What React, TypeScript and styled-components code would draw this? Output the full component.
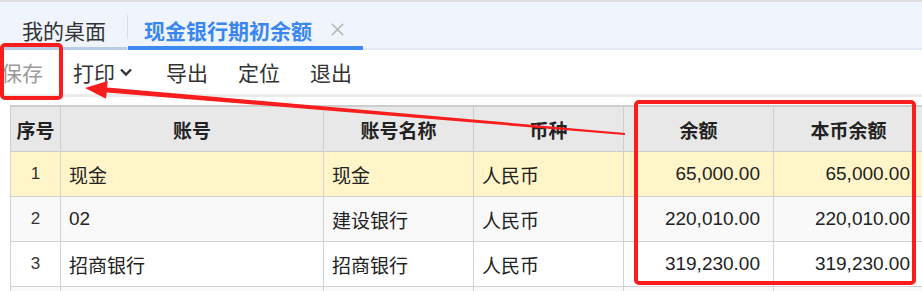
import styled, { createGlobalStyle } from "styled-components";

const GlobalStyle = createGlobalStyle`
  html, body {
    margin: 0;
    padding: 0;
    background: #fff;
    overflow: hidden;
  }
  body {
    font-family: "Liberation Sans", "Noto Sans CJK SC", sans-serif;
    color: #333;
  }
`;

type Row = {
  no: number;
  code: string;
  name: string;
  currency: string;
  balance: string;
  localBalance: string;
};

const rows: Row[] = [
  { no: 1, code: "现金", name: "现金", currency: "人民币", balance: "65,000.00", localBalance: "65,000.00" },
  { no: 2, code: "02", name: "建设银行", currency: "人民币", balance: "220,010.00", localBalance: "220,010.00" },
  { no: 3, code: "招商银行", name: "招商银行", currency: "人民币", balance: "319,230.00", localBalance: "319,230.00" },
];

const columns = [
  { title: "序号", width: 50 },
  { title: "账号", width: 263 },
  { title: "账号名称", width: 150 },
  { title: "币种", width: 150 },
  { title: "余额", width: 150 },
  { title: "本币余额", width: 150 },
];

export default function App() {
  return (
    <>
      <GlobalStyle />
      <Page>
        <TabBar>
          <Tab>我的桌面</Tab>
          <TabDivider />
          <Tab active>
            现金银行期初余额
            <CloseIcon viewBox="0 0 16 16">
              <path d="M2 2 L14 14 M14 2 L2 14" />
            </CloseIcon>
          </Tab>
        </TabBar>

        <Toolbar>
          <ToolButton disabled>保存</ToolButton>
          <ToolButton>
            打印
            <Chevron viewBox="0 0 16 16">
              <path d="M3 5.5 L8 10.5 L13 5.5" />
            </Chevron>
          </ToolButton>
          <ToolButton>导出</ToolButton>
          <ToolButton>定位</ToolButton>
          <ToolButton>退出</ToolButton>
        </Toolbar>

        <Grid>
          <colgroup>
            {columns.map((c) => (
              <col key={c.title} style={{ width: c.width }} />
            ))}
          </colgroup>
          <thead>
            <tr>
              {columns.map((c) => (
                <HeadCell key={c.title}>{c.title}</HeadCell>
              ))}
            </tr>
          </thead>
          <tbody>
            {rows.map((r, i) => (
              <BodyRow key={r.no} tone={i === 0 ? "selected" : i % 2 === 1 ? "stripe" : "plain"}>
                <IndexCell>{r.no}</IndexCell>
                <Cell>{r.code}</Cell>
                <Cell>{r.name}</Cell>
                <Cell>{r.currency}</Cell>
                <Cell numeric>{r.balance}</Cell>
                <Cell numeric>{r.localBalance}</Cell>
              </BodyRow>
            ))}
            <BodyRow tone="stripe">
              <IndexCell />
              <Cell />
              <Cell />
              <Cell />
              <Cell numeric />
              <Cell numeric />
            </BodyRow>
          </tbody>
        </Grid>

        {/* annotations drawn over the screenshot */}
        <Highlight style={{ left: 0, top: 43, width: 63, height: 57 }} />
        <Highlight style={{ left: 634, top: 100, width: 282, height: 185 }} />
        <Arrow viewBox="0 0 922 291">
          <polygon points="85,88 107.7,80.9 107.1,87.4 625.1,133 624.9,135 106.7,92.4 106.1,98.8" />
        </Arrow>
      </Page>
    </>
  );
}

const Page = styled.div`
  position: relative;
  width: 922px;
  height: 291px;
  overflow: hidden;
`;

const TabBar = styled.div`
  display: flex;
  align-items: flex-end;
  height: 50px;
  box-sizing: border-box;
  border-top: 2px solid #dedede;
  border-bottom: 2px solid #e4e9f1;
  background: #f0f5fd;
`;

const Tab = styled.div<{ active?: boolean }>`
  display: flex;
  align-items: center;
  gap: 18px;
  height: 48px;
  box-sizing: border-box;
  padding: 11px ${({ active }) => (active ? "18px" : "21px")} 0 ${({ active }) => (active ? "16px" : "22px")};
  margin-bottom: -2px;
  border-bottom: ${({ active }) => (active ? "4px solid #3d8af5" : "3px solid #b9cde9")};
  font-size: 21px;
  font-weight: ${({ active }) => (active ? 700 : 400)};
  color: ${({ active }) => (active ? "#3a86f0" : "#333")};
  white-space: nowrap;
`;

const TabDivider = styled.div`
  width: 1px;
  height: 24px;
  margin-bottom: 9px;
  background: #dcdcdc;
`;

const CloseIcon = styled.svg`
  width: 15px;
  height: 15px;
  fill: none;
  stroke: #b8b8b8;
  stroke-width: 1.6;
`;

const Toolbar = styled.div`
  display: flex;
  align-items: center;
  gap: 30px;
  height: 47px;
  box-sizing: border-box;
  padding-left: 1px;
  border-bottom: 3px solid #ebebeb;
`;

const ToolButton = styled.div<{ disabled?: boolean }>`
  display: flex;
  align-items: center;
  font-size: 21px;
  color: ${({ disabled }) => (disabled ? "#9a9a9a" : "#333")};
  white-space: nowrap;
`;

const Chevron = styled.svg`
  width: 16px;
  height: 16px;
  margin: 0 2px 0 3px;
  fill: none;
  stroke: #333;
  stroke-width: 2.4;
`;

const Grid = styled.table`
  margin: 8px 0 0 10px;
  border-collapse: collapse;
  table-layout: fixed;
  width: 913px;
  font-size: 19px;
`;

const HeadCell = styled.th`
  height: 44px;
  padding: 0;
  background: #e8e8e8;
  border: 1px solid #cdcdcd;
  border-top-width: 2px;
  font-weight: 700;
  color: #222;
  text-align: center;
`;

const BodyRow = styled.tr<{ tone: "selected" | "stripe" | "plain" }>`
  height: 45px;
  background: ${({ tone }) =>
    tone === "selected" ? "#fff5c9" : tone === "stripe" ? "#f9f9f9" : "#fff"};
`;

const Cell = styled.td<{ numeric?: boolean }>`
  padding: 0 ${({ numeric }) => (numeric ? "13px" : "8px")};
  border: 1px solid #d2d2d2;
  color: #222;
  text-align: ${({ numeric }) => (numeric ? "right" : "left")};
  white-space: nowrap;
`;

const IndexCell = styled.td`
  padding: 0;
  border: 1px solid #d2d2d2;
  font-size: 17px;
  color: #333;
  text-align: center;
`;

const Highlight = styled.div`
  position: absolute;
  box-sizing: border-box;
  border: 4px solid #f91d1d;
  border-radius: 5px;
  pointer-events: none;
`;

const Arrow = styled.svg`
  position: absolute;
  left: 0;
  top: 0;
  width: 922px;
  height: 291px;
  fill: #f91d1d;
  pointer-events: none;
`;
